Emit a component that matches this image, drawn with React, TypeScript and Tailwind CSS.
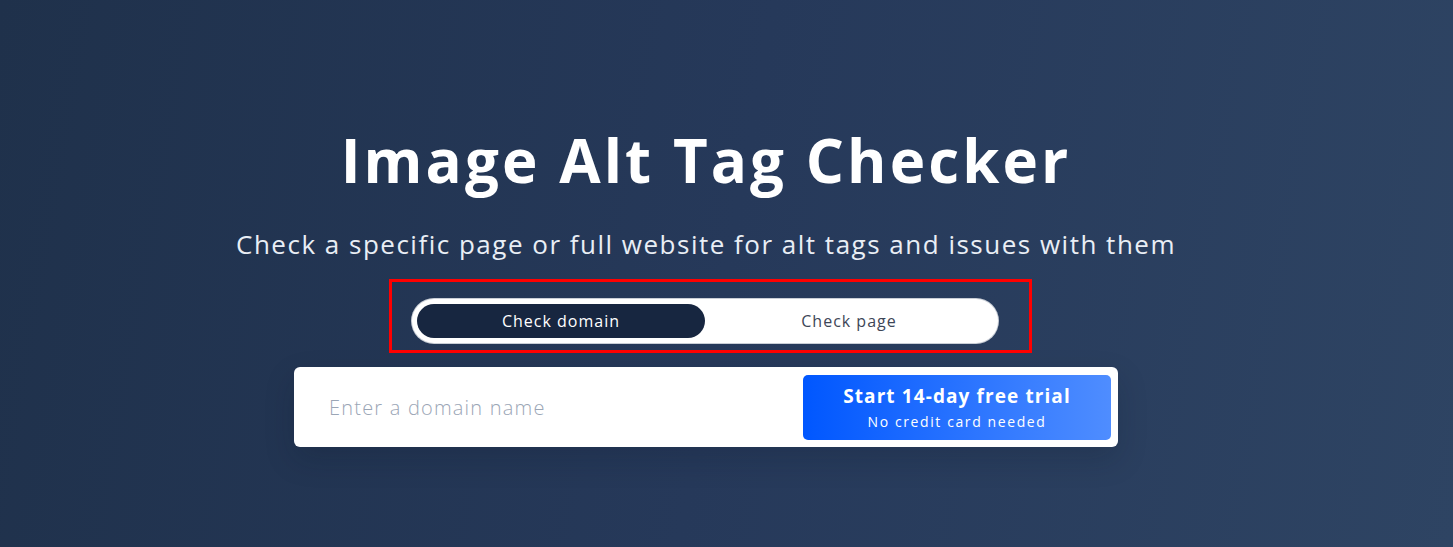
import React from "react";

export default function App() {
  return (
    <div
      className="w-full h-[547px] overflow-hidden bg-[linear-gradient(100deg,#1f314b_0%,#26395a_50%,#2e4463_100%)] text-white"
      style={{ fontFamily: '"Open Sans", "Liberation Sans", sans-serif' }}
    >
      <div className="flex flex-col items-center pr-[41px]">
        <h1 className="mt-[124px] h-[72px] text-[60px] leading-[72px] font-bold tracking-[3.1px] text-white">
          Image Alt Tag Checker
        </h1>
        <p className="mt-[30px] h-[36px] text-[26px] leading-[36px] tracking-[1.5px] text-[#e9eef5]">
          Check a specific page or full website for alt tags and issues with them
        </p>
        <div className="mt-[17px] ml-[9px] w-[643px] h-[74px] border-[3px] border-[#ff0000] pl-[20px] pr-[31px] pt-[17px]">
          <div className="flex h-[44px] w-[586px] items-center rounded-full bg-white p-[5px] shadow-[0_0_0_1px_#c9ced6]">
            <div className="flex h-[34px] w-[288px] items-center justify-center rounded-full bg-[#172640] text-[16px] tracking-[1px] text-white">
              Check domain
            </div>
            <div className="flex h-[34px] flex-1 items-center justify-center text-[16px] tracking-[1px] text-[#3e4657]">
              Check page
            </div>
          </div>
        </div>
        <div className="mt-[14px] flex h-[80px] w-[824px] items-center justify-between rounded-[6px] bg-white pl-[35px] pr-[7px] pt-[1px] shadow-[0_12px_30px_rgba(10,20,40,0.18)]">
          <span className="text-[20px] font-light tracking-[1.2px] text-[#9ba6b6]">Enter a domain name</span>
          <div className="flex h-[65px] w-[308px] flex-col items-center justify-center rounded-[5px] bg-[linear-gradient(90deg,#0057ff,#4f8dff)]">
            <span className="text-[19px] leading-[24px] font-bold tracking-[1.1px] text-white">
              Start 14-day free trial
            </span>
            <span className="mt-[5px] text-[14px] leading-[18px] tracking-[1.6px] text-white">
              No credit card needed
            </span>
          </div>
        </div>
      </div>
    </div>
  );
}
